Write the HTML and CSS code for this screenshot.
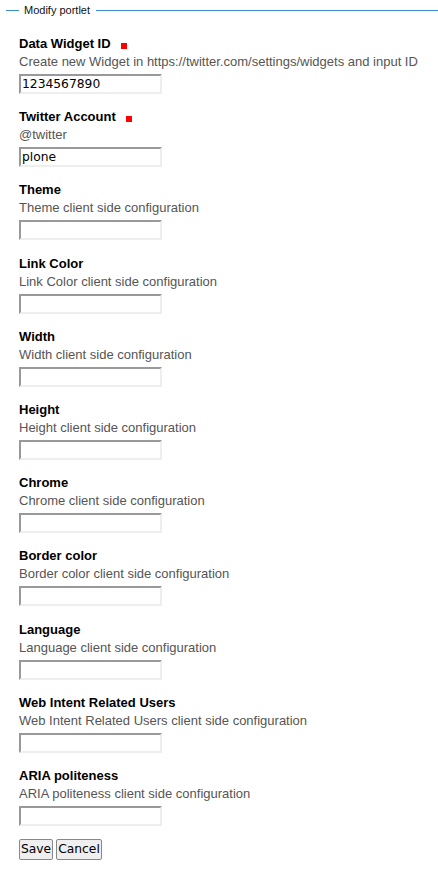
FILE: index.html
```html
<!DOCTYPE html>
<html>
<head>
<meta charset="utf-8">
<link rel="stylesheet" href="styles.css">
</head>
<body>
<form class="form">
<fieldset class="box">
<legend class="legend">Modify portlet</legend>

<div class="field">
<label class="label">Data Widget ID <span class="req"></span></label>
<div class="help">Create new Widget in https://twitter.com/settings/widgets and input ID</div>
<input class="text" type="text" value="1234567890">
</div>

<div class="field">
<label class="label">Twitter Account <span class="req"></span></label>
<div class="help">@twitter</div>
<input class="text" type="text" value="plone">
</div>

<div class="field">
<label class="label">Theme</label>
<div class="help">Theme client side configuration</div>
<input class="text" type="text">
</div>

<div class="field">
<label class="label">Link Color</label>
<div class="help">Link Color client side configuration</div>
<input class="text" type="text">
</div>

<div class="field">
<label class="label">Width</label>
<div class="help">Width client side configuration</div>
<input class="text" type="text">
</div>

<div class="field">
<label class="label">Height</label>
<div class="help">Height client side configuration</div>
<input class="text" type="text">
</div>

<div class="field">
<label class="label">Chrome</label>
<div class="help">Chrome client side configuration</div>
<input class="text" type="text">
</div>

<div class="field">
<label class="label">Border color</label>
<div class="help">Border color client side configuration</div>
<input class="text" type="text">
</div>

<div class="field">
<label class="label">Language</label>
<div class="help">Language client side configuration</div>
<input class="text" type="text">
</div>

<div class="field">
<label class="label">Web Intent Related Users</label>
<div class="help">Web Intent Related Users client side configuration</div>
<input class="text" type="text">
</div>

<div class="field field-last">
<label class="label">ARIA politeness</label>
<div class="help">ARIA politeness client side configuration</div>
<input class="text" type="text">
</div>

<div class="actions">
<button class="btn" type="button">Save</button>
<button class="btn" type="button">Cancel</button>
</div>
</fieldset>
</form>
</body>
</html>
```

FILE: styles.css
```css
html, body {
  margin: 0;
  padding: 0;
  background: #fff;
}
body {
  font-family: "Liberation Sans", Arial, sans-serif;
  font-size: 13px;
  color: #000;
}
.form {
  margin: 0;
  padding: 4px 0 0 6px;
}
.box {
  margin: 0;
  padding: 18px 0 0 13px;
  border: 0;
  border-top: 1px solid #3b8dcc;
  min-width: 0;
}
.legend {
  padding: 0 6px 0 5px;
  font-size: 11px;
  line-height: 13px;
  color: #111;
}
.field {
  display: flex;
  flex-direction: column;
  align-items: flex-start;
  margin-bottom: 14.2px;
}
.field-last {
  margin-bottom: 13px;
}
.label {
  font-weight: bold;
  font-size: 13px;
  line-height: 18px;
  color: #000;
}
.req {
  display: inline-block;
  width: 6px;
  height: 6px;
  background: #f00;
  margin-left: 7px;
  vertical-align: -1px;
}
.help {
  font-size: 13px;
  line-height: 18px;
  color: #555;
  margin-bottom: 3px;
}
.text {
  box-sizing: border-box;
  width: 143px;
  height: 20px;
  margin: 0;
  padding: 0 1px;
  border-style: solid;
  border-width: 2px;
  border-color: #999 #eee #eee #999;
  font-family: "DejaVu Sans", sans-serif;
  font-size: 12.3px;
  color: #000;
  background: #fff;
  outline: none;
}
.actions {
  display: flex;
  gap: 3px;
  padding-bottom: 10px;
}
.btn {
  box-sizing: border-box;
  height: 21px;
  margin: 0;
  padding: 0 1px;
  font-family: "DejaVu Sans", sans-serif;
  font-size: 12.3px;
  color: #000;
  background: #efefef;
  border: 1px solid #888;
  border-radius: 2px;
}
```
